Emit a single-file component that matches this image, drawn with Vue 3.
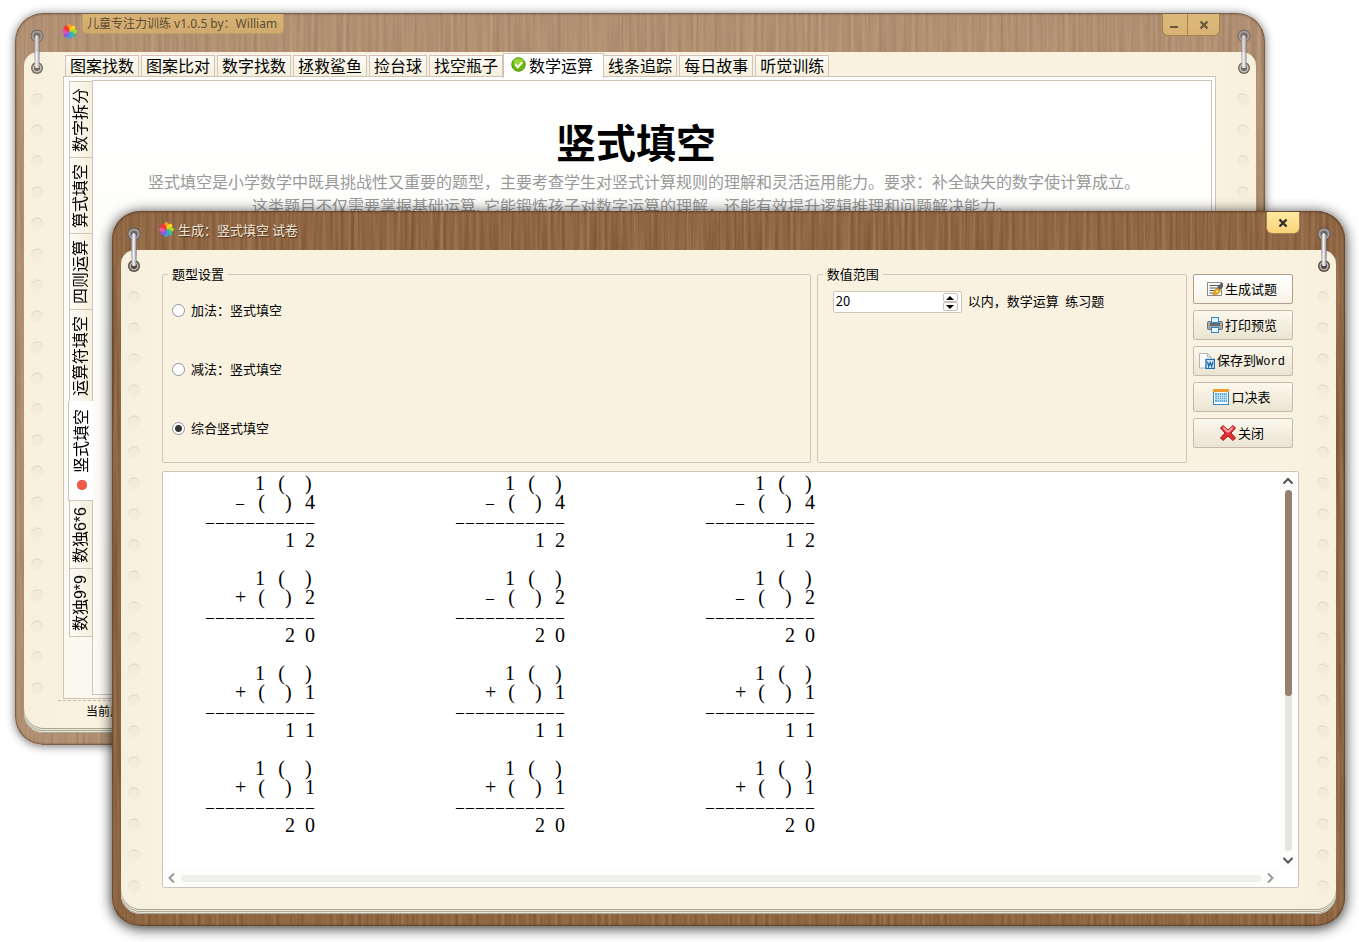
<template>
    <div class="desktop">
        <svg class="defs" aria-hidden="true">
            <filter id="grain" x="0" y="0" width="100%" height="100%" color-interpolation-filters="sRGB">
                <feTurbulence type="fractalNoise" baseFrequency="0.28 0.007" numOctaves="4" seed="7" />
                <feColorMatrix type="matrix" values="0.22 0 0 0 0.45  0.21 0 0 0 0.295  0.19 0 0 0 0.17  0 0 0 0 1" />
            </filter>
            <linearGradient id="steel" x1="0" x2="1" y1="0" y2="0">
                <stop offset="0" stop-color="#8e8e92" />
                <stop offset="0.4" stop-color="#f4f4f6" />
                <stop offset="0.7" stop-color="#c4c4c8" />
                <stop offset="1" stop-color="#6c6c70" />
            </linearGradient>
            <symbol id="flower" viewBox="0 0 16 16">
                <ellipse v-for="(color, index) in petals" :key="color" cx="8" cy="3.6" rx="2.3" ry="3.5" :fill="color" :transform="`rotate(${index * 45} 8 8)`" />
            </symbol>
            <symbol id="ring" viewBox="0 0 18 46">
                <circle cx="9" cy="8" r="6.5" fill="#5c5856" />
                <circle cx="9" cy="8" r="4.6" fill="#6f6c6b" stroke="#a3a1a1" stroke-width="2" />
                <circle cx="9" cy="8" r="2.6" fill="#4b4847" />
                <circle cx="9" cy="40" r="6" fill="#57463d" />
                <circle cx="9" cy="40" r="3.8" fill="#4d4744" stroke="#b9b6b3" stroke-width="1.6" />
                <path d="M6.6 8c-0.6 10-0.6 22 0.6 32h4c0.6-10 0.6-22 0-32a2.3 2.3 0 0 0-4.600 0z" fill="url(#steel)" />
                <path d="M6.8 8a2.2 2.2 0 0 1 4.2 0" fill="none" stroke="#444" stroke-width="1" />
            </symbol>
        </svg>

        <section class="window main-window">
            <div class="wood"><svg><rect width="100%" height="100%" filter="url(#grain)" /></svg></div>
            <header class="title-bar">
                <svg class="flower"><use href="#flower" /></svg>
                <h1 class="caption-tab">儿童专注力训练 v1.0.5 by：William</h1>
                <div class="window-buttons">
                    <button type="button" class="minimize" aria-label="最小化">
                        <svg viewBox="0 0 10 10"><path d="M0 7h8" stroke="#6b5940" stroke-width="2" /></svg>
                    </button>
                    <button type="button" aria-label="关闭窗口">
                        <svg viewBox="0 0 10 10"><path d="M1.5 1.5l7 7M8.5 1.5l-7 7" stroke="#6b5940" stroke-width="2.4" /></svg>
                    </button>
                </div>
            </header>
            <div class="paper">
                <div class="holes"></div>
                <div class="main-content">
                    <nav class="tabs">
                        <button v-for="tab in tabs" :key="tab" type="button" class="tab" :class="{ active: tab === activeTab }" @click="activeTab = tab">
                            <svg v-if="tab === activeTab" class="check" viewBox="0 0 16 16">
                                <circle cx="8" cy="8" r="7.2" fill="#6cb80c" stroke="#4c8f06" />
                                <ellipse cx="8" cy="5" rx="5" ry="3.4" fill="#a5dc45" opacity="0.8" />
                                <path d="M4.4 7.8l2.8 3 4.6-5" fill="none" stroke="#fff" stroke-width="2.2" />
                            </svg>
                            {{ tab }}
                        </button>
                    </nav>
                    <div class="pane">
                        <nav class="side-tabs">
                            <button v-for="tab in sideTabs" :key="tab" type="button" class="side-tab" :class="{ active: tab === activeSideTab }" @click="activeSideTab = tab">
                                <span class="side-label">{{ tab }}</span>
                                <i v-if="tab === activeSideTab" class="dot"></i>
                            </button>
                        </nav>
                        <article class="page">
                            <h2>竖式填空</h2>
                            <p>竖式填空是小学数学中既具挑战性又重要的题型，主要考查学生对竖式计算规则的理解和灵活运用能力。要求：补全缺失的数字使计算成立。</p>
                            <p>这类题目不仅需要掌握基础运算,&nbsp;它能锻炼孩子对数字运算的理解，还能有效提升逻辑推理和问题解决能力。&emsp;&ensp;</p>
                        </article>
                    </div>
                    <footer class="status">当前用户</footer>
                </div>
                <div class="holes"></div>
            </div>
            <svg class="ring ring-left"><use href="#ring" /></svg>
            <svg class="ring ring-right"><use href="#ring" /></svg>
        </section>

        <section class="window dialog" role="dialog" aria-labelledby="dialog-title">
            <div class="wood"><svg><rect width="100%" height="100%" filter="url(#grain)" /></svg></div>
            <header class="title-bar">
                <svg class="flower"><use href="#flower" /></svg>
                <h2 id="dialog-title" class="caption">生成：竖式填空 试卷</h2>
                <div class="window-buttons">
                    <button type="button" aria-label="关闭对话框">
                        <svg viewBox="0 0 10 10"><path d="M1.5 1.5l7 7M8.5 1.5l-7 7" stroke="#2d2d2d" stroke-width="2.4" /></svg>
                    </button>
                </div>
            </header>
            <div class="paper">
                <div class="holes"></div>
                <div class="dialog-content">
                    <div class="settings">
                        <fieldset class="types">
                            <legend>题型设置</legend>
                            <label v-for="type in types" :key="type" class="radio">
                                <input v-model="selectedType" type="radio" name="type" :value="type" />
                                {{ type }}
                            </label>
                        </fieldset>
                        <fieldset class="range">
                            <legend>数值范围</legend>
                            <div class="range-row">
                                <div class="spin">
                                    <input id="limit" v-model.number="limit" type="number" />
                                    <div class="spin-buttons">
                                        <button type="button" aria-label="增加" @click="limit++">
                                            <svg viewBox="0 0 8 4"><path d="M0 4l4-4 4 4z" /></svg>
                                        </button>
                                        <button type="button" aria-label="减少" @click="limit--">
                                            <svg viewBox="0 0 8 4"><path d="M0 0l4 4 4-4z" /></svg>
                                        </button>
                                    </div>
                                </div>
                                <label for="limit">以内，数学运算&ensp;练习题</label>
                            </div>
                        </fieldset>
                        <div class="actions">
                            <button type="button" class="primary">
                                <svg viewBox="0 0 16 16">
                                    <rect x="0.5" y="1.5" width="14" height="13" fill="#fff" stroke="#8c8c8c" />
                                    <path d="M2.5 4.5h10M2.5 7h7M2.5 9.5h5M2.5 12h4" stroke="#555" />
                                    <path d="M9 7.5l5-5.5h2v4l-4 4z" fill="#5b6068" />
                                    <path d="M6 14l1.5-4.5L10.5 7l3 3-2.5 3z" fill="#f5a81c" stroke="#c97c06" stroke-width="0.7" />
                                    <circle cx="10" cy="10.5" r="1" fill="#fff3c4" />
                                </svg>
                                <span>生成试题</span>
                            </button>
                            <button type="button">
                                <svg viewBox="0 0 16 16">
                                    <rect x="0.5" y="4.5" width="15" height="8" rx="1" fill="#a3a7ab" stroke="#6c7074" />
                                    <rect x="4.5" y="0.5" width="7" height="5" fill="#dff1fc" stroke="#2f86c5" />
                                    <rect x="3" y="6" width="10" height="3" fill="#666a6f" />
                                    <rect x="4.5" y="10.5" width="7" height="5" fill="#eaf6fd" stroke="#2f86c5" />
                                </svg>
                                <span>打印预览</span>
                            </button>
                            <button type="button">
                                <svg viewBox="0 0 16 16">
                                    <path d="M0.5 0.5h8L12 4v11H0.5z" fill="#fbfbfb" stroke="#b4b4b4" />
                                    <path d="M8.5 0.5V4H12" fill="none" stroke="#b4b4b4" />
                                    <rect x="7" y="6.5" width="8.5" height="9" fill="#fff" stroke="#1d6fb5" stroke-width="1.4" />
                                    <path d="M8.5 8.5l1.2 5 1.5-4 1.5 4 1.2-5" fill="none" stroke="#1d6fb5" stroke-width="1.4" />
                                </svg>
                                <span>保存到<span class="latin">Word</span></span>
                            </button>
                            <button type="button">
                                <svg viewBox="0 0 16 16">
                                    <rect x="0.5" y="1.5" width="15" height="14" fill="#fff" stroke="#3188c6" />
                                    <path d="M0 1.5h16" stroke="#f29a2e" stroke-width="3" />
                                    <rect x="2" y="4" width="12" height="9" fill="#58a5dc" />
                                    <path d="M2 6.5h12M2 8.5h12M2 10.5h12M4.5 4v9M6.5 4v9M8.5 4v9M10.5 4v9M12.5 4v9" stroke="#d5ebf9" stroke-width="0.7" />
                                </svg>
                                <span>口决表</span>
                            </button>
                            <button type="button">
                                <svg viewBox="0 0 16 16">
                                    <path d="M3 0.5L8 5l5-4.5L15.5 3 11 8l4.5 5-2.5 2.5L8 11l-5 4.5L0.5 13 5 8 0.5 3z" fill="#e02f33" stroke="#b21419" stroke-linejoin="round" />
                                    <path d="M3 2l5 4.5L13 2M3.5 3.5L8 7.5l4.5-4" fill="none" stroke="#f7a3a3" stroke-width="1.3" />
                                </svg>
                                <span>关闭</span>
                            </button>
                        </div>
                    </div>
                    <div class="preview">
                        <div class="sheet">
                            <div v-for="(problem, index) in problems" :key="index" class="problem">
                                <div v-for="(line, row) in problemLines(problem)" :key="row" class="line">
                                    <span v-for="(char, col) in line" :key="col" :class="charClass(char)">{{ char }}</span>
                                </div>
                            </div>
                        </div>
                        <div class="scroll scroll-y">
                            <svg viewBox="0 0 10 10"><path d="M0.5 7.5L5 3l4.5 4.5" /></svg>
                            <div class="track"><div class="thumb"></div></div>
                            <svg viewBox="0 0 10 10"><path d="M0.5 3L5 7.5 9.5 3" /></svg>
                        </div>
                        <div class="scroll scroll-x">
                            <svg viewBox="0 0 10 10"><path d="M7 0.5L2.5 5 7 9.5" /></svg>
                            <div class="track"></div>
                            <svg viewBox="0 0 10 10"><path d="M3 0.5L7.5 5 3 9.5" /></svg>
                        </div>
                    </div>
                </div>
                <div class="holes"></div>
            </div>
            <svg class="ring ring-left"><use href="#ring" /></svg>
            <svg class="ring ring-right"><use href="#ring" /></svg>
        </section>
    </div>
</template>

<script setup>
import { ref } from 'vue';

const petals = ['#ff9a1a', '#ffd21f', '#a5dc2c', '#35c08c', '#3d9be9', '#8c5bd6', '#e255b4', '#f23a34'];

const tabs = ['图案找数', '图案比对', '数字找数', '拯救鲨鱼', '捡台球', '找空瓶子', '数学运算', '线条追踪', '每日故事', '听觉训练'];
const activeTab = ref('数学运算');

const sideTabs = ['数字拆分', '算式填空', '四则运算', '运算符填空', '竖式填空', '数独6*6', '数独9*9'];
const activeSideTab = ref('竖式填空');

const types = ['加法：竖式填空', '减法：竖式填空', '综合竖式填空'];
const selectedType = ref('综合竖式填空');
const limit = ref(20);

const problems = [
    { sign: '–', digit: '4', result: '1 2' },
    { sign: '–', digit: '4', result: '1 2' },
    { sign: '–', digit: '4', result: '1 2' },
    { sign: '+', digit: '2', result: '2 0' },
    { sign: '–', digit: '2', result: '2 0' },
    { sign: '–', digit: '2', result: '2 0' },
    { sign: '+', digit: '1', result: '1 1' },
    { sign: '+', digit: '1', result: '1 1' },
    { sign: '+', digit: '1', result: '1 1' },
    { sign: '+', digit: '1', result: '2 0' },
    { sign: '+', digit: '1', result: '2 0' },
    { sign: '+', digit: '1', result: '2 0' }
];

// every line is eleven characters wide
const problemLines = ({ sign, digit, result }) => {
    return ['1 (  )', `${sign} (  ) ${digit}`, '–'.repeat(11), result].map((line) => line.padStart(11).split(''));
};

const charClass = (char) => {
    if (char === '(') return 'open';
    if (char === ')') return 'close';
    if (char === '–') return 'dash';
    return '';
};
</script>

<style>
body {
    margin: 0;
    background: #fff;
}
</style>

<style scoped>
.desktop {
    position: relative;
    min-height: 100vh;
    overflow: hidden;
    font-family: 'Noto Sans CJK SC', sans-serif;
    font-size: 13px;
    color: #000;
}

.desktop * {
    box-sizing: border-box;
}

button,
input {
    font: inherit;
    color: inherit;
}

h1,
h2,
p {
    margin: 0;
    font-weight: normal;
}

.defs {
    position: absolute;
    width: 0;
    height: 0;
}

.window {
    position: absolute;
    display: flex;
    flex-direction: column;
    border-radius: 28px;
    padding: 0 9px 12px;
}

.main-window {
    inset: 13px 94px 197px 15px;
    box-shadow: 0 1px 10px rgba(0, 0, 0, 0.55);
}

.dialog {
    inset: 211px 14px 16px 112px;
    box-shadow: 0 2px 14px rgba(0, 0, 0, 0.85);
}

.wood {
    position: absolute;
    inset: 0;
    overflow: hidden;
    border-radius: 28px;
    background: #8b6244;
}

.wood svg {
    display: block;
    width: 100%;
    height: 100%;
}

.wood::after {
    content: '';
    position: absolute;
    inset: 0;
    border-radius: 28px;
    box-shadow: inset 0 0 2px 1px rgba(60, 38, 24, 0.6);
}

.main-window .wood svg {
    opacity: 0.7;
}

.main-window .wood {
    background: #fff0e2;
}

.title-bar {
    position: relative;
    flex: none;
    display: flex;
    align-items: flex-start;
    height: 39px;
    padding: 1px 36px 0 38px;
}

.flower {
    width: 15px;
    height: 15px;
    margin-top: 10px;
}

.caption-tab {
    margin-left: 5px;
    padding: 0 6px 0 4px;
    border: 1px solid #c09d69;
    border-top: 0;
    border-radius: 0 0 5px 5px;
    background: linear-gradient(rgba(220, 184, 116, 0.9), rgba(216, 176, 108, 0.8));
    font-family: 'Noto Sans', 'Noto Sans CJK SC', sans-serif;
    font-size: 12px;
    line-height: 19px;
    color: #5e4c36;
    white-space: nowrap;
}

.caption {
    margin-left: 4px;
    font-size: 13px;
    line-height: 18px;
    padding-top: 9px;
    color: #f0e6d8;
    text-shadow: 1px 1px 1px #4d3320;
}

.window-buttons {
    display: flex;
    margin-left: auto;
    border: 1px solid #a58350;
    border-top: 0;
    border-radius: 0 0 6px 6px;
    overflow: hidden;
}

.window-buttons button {
    display: grid;
    place-items: center;
    width: 32px;
    height: 21px;
    padding: 0;
    border: 0;
    background: linear-gradient(#ffeaa0, #fdd27a);
}

.window-buttons button + button {
    border-left: 1px solid #a58350;
}

.main-window .window-buttons button {
    background: linear-gradient(#dcb97a, #d8b274);
}

.window-buttons .minimize {
    width: 24px;
}

.window-buttons svg {
    width: 10px;
    height: 10px;
}

.paper {
    position: relative;
    flex: 1;
    display: flex;
    min-height: 0;
    border-radius: 14px 14px 20px 20px;
    background: linear-gradient(90deg, #f6f0dc, #f9f2e0 5%, #f9f2e0 95%, #f6f0dc);
    box-shadow: inset 0 -1px 0 #a9a999, inset 0 -2px 0 #e9e7d3, inset 0 -3px 0 #aaa999, inset 0 -4px 0 #efebd8, inset 0 -5px 0 #a8a595;
}

.holes {
    flex: none;
    width: 12px;
    margin: 31px 7px 13px;
    background:
        radial-gradient(circle at 6px 17px, #f2ecda 5px, transparent 6px) 0 0 / 12px 31px repeat-y,
        radial-gradient(circle at 6px 16px, #ddd5c1 5px, transparent 6px) 0 0 / 12px 31px repeat-y;
}

.main-window .holes {
    margin-bottom: 26px;
}

.ring {
    position: absolute;
    top: 15px;
    width: 18px;
    height: 46px;
}

.ring-left {
    left: 13px;
}

.ring-right {
    right: 12px;
}

.main-window .ring {
    opacity: 0.8;
}

.main-content {
    flex: 1;
    display: flex;
    flex-direction: column;
    min-width: 0;
    margin: 0 14px 0 8px;
}

.tabs {
    position: relative;
    z-index: 1;
    display: flex;
    align-items: flex-end;
    gap: 2px;
    height: 25px;
    padding-left: 7px;
}

.tab {
    display: flex;
    align-items: center;
    gap: 3px;
    height: 22px;
    padding: 0 4px 2px;
    border: 1px solid #d0c4b9;
    background: linear-gradient(#fdfbf5, #f5efdc);
    font-size: 16px;
    line-height: 20px;
    white-space: nowrap;
}

.tab.active {
    height: 25px;
    margin: 0 -3px -1px -2px;
    padding: 0 10px 3px 7px;
    border-bottom: 0;
    background: #fff;
}

.check {
    width: 15px;
    height: 15px;
}

.pane {
    flex: 1;
    display: flex;
    margin: -1px 0 0 5px;
    padding: 3px;
    border: 1px solid #d0c4b9;
    background: linear-gradient(#fff, #fbf8ef);
}

.side-tabs {
    position: relative;
    z-index: 1;
    display: flex;
    flex-direction: column;
    align-items: flex-end;
    width: 26px;
    margin-right: -1px;
    padding-top: 1px;
}

.side-tab {
    flex: none;
    display: flex;
    flex-direction: column;
    align-items: center;
    gap: 4px;
    width: 24px;
    margin-bottom: -1px;
    padding: 6px 0 5px;
    border: 1px solid #d0c4b9;
    background: linear-gradient(90deg, #fdfbf5, #f5efdc);
    font-family: 'Liberation Sans', 'Noto Sans CJK SC', sans-serif;
    font-size: 16px;
}

.side-tab.active {
    width: 25px;
    padding: 8px 0 8px 2px;
    border-width: 0 0 0 1px;
    background: #fff;
}

.side-label {
    writing-mode: vertical-rl;
    text-orientation: sideways;
    transform: rotate(180deg);
    line-height: 22px;
    white-space: nowrap;
}

.dot {
    width: 10px;
    height: 10px;
    margin: 3px;
    border-radius: 50%;
    background: #f25a48;
    box-shadow: inset 0 0 0 1px #d8604f;
}

.page {
    flex: 1;
    min-width: 0;
    padding: 32px 16px 0 0;
    border: 1px solid #d0c4b9;
    background: linear-gradient(#fff, #fbf9f2);
    text-align: center;
}

.page h2 {
    padding-right: 16px;
    font-size: 40px;
    font-weight: bold;
    line-height: 56px;
}

.page p {
    font-size: 16px;
    line-height: 24px;
    color: #999;
    white-space: nowrap;
}

.status {
    height: 33px;
    margin-top: 1px;
    padding-left: 28px;
    border-top: 1px dashed #c5bcae;
    font-size: 12px;
    line-height: 20px;
}

.dialog-content {
    flex: 1;
    display: flex;
    flex-direction: column;
    gap: 8px;
    min-width: 0;
    margin: 15px 11px 26px 15px;
}

.settings {
    display: flex;
    padding-right: 6px;
}

fieldset {
    min-width: 0;
    margin: 0;
    border: 1px solid #cfc5bf;
    border-radius: 2px;
}

legend {
    padding: 0 4px;
    line-height: 18px;
}

.types {
    flex: 16 1 0;
    display: flex;
    flex-direction: column;
    gap: 41px;
    padding: 18px 5px 25px;
}

.range {
    flex: 9 1 0;
    margin-left: 6px;
    padding: 8px 5px;
}

.radio {
    display: flex;
    align-items: center;
    gap: 6px;
    padding-left: 4px;
    line-height: 18px;
}

.radio input {
    appearance: none;
    width: 13px;
    height: 13px;
    margin: 0;
    border: 1px solid #93949c;
    border-radius: 50%;
    background: #fff;
}

.radio input:checked {
    background: radial-gradient(circle, #333 0 3px, #fff 4px);
}

.range-row {
    display: flex;
    align-items: center;
    gap: 6px;
    padding-left: 10px;
}

.range-row label {
    padding-bottom: 3px;
    line-height: 18px;
    white-space: nowrap;
}

.spin {
    display: flex;
    align-items: center;
    width: 129px;
    height: 22px;
    padding: 1px 3px 1px 2px;
    border: 1px solid #cfc5bf;
    border-radius: 2px;
    background: #fff;
}

.spin input {
    flex: 1;
    min-width: 0;
    padding: 0 0 2px;
    border: 0;
    outline: 0;
    background: none;
    appearance: textfield;
    line-height: 18px;
}

.spin input::-webkit-inner-spin-button {
    appearance: none;
    margin: 0;
}

.spin-buttons {
    display: flex;
    flex-direction: column;
}

.spin-buttons button {
    display: grid;
    place-items: center;
    width: 15px;
    height: 9px;
    padding: 0;
    border: 1px solid #cfc0b8;
    border-radius: 2px;
    background: #fff;
}

.spin-buttons svg {
    width: 8px;
    height: 4px;
}

.actions {
    flex: none;
    display: flex;
    flex-direction: column;
    gap: 6px;
    width: 100px;
    margin: 9px 0 0 6px;
}

.actions button {
    display: flex;
    align-items: center;
    justify-content: center;
    height: 30px;
    padding: 0 2px 1px 0;
    border: 1px solid #c6bab0;
    border-radius: 2px;
    background: linear-gradient(#fcf8ec, #eae4d2);
    line-height: 18px;
    white-space: nowrap;
}

.actions .primary {
    border-color: #b39c8e;
    background: linear-gradient(#fff, #f8f3e6);
}

.actions svg {
    width: 16px;
    height: 16px;
    margin-right: 2px;
}

.latin {
    font-family: 'Liberation Mono', monospace;
    font-size: 12px;
}

.preview {
    flex: 1;
    display: grid;
    grid-template-columns: 1fr 18px;
    grid-template-rows: 1fr 18px;
    min-height: 0;
    padding-right: 1px;
    border: 1px solid #cdc3bb;
    border-radius: 2px;
    background: #fff;
}

.sheet {
    display: grid;
    grid-template-columns: repeat(3, 110px);
    align-content: start;
    gap: 19px 140px;
    min-height: 0;
    overflow: hidden;
    padding: 2px 0 0 42px;
    font-family: 'Liberation Serif', serif;
    font-size: 20px;
    line-height: 19px;
}

.line {
    display: grid;
    grid-template-columns: repeat(11, 10px);
    height: 19px;
    text-align: center;
    white-space: pre;
}

.open {
    text-align: right;
}

.close {
    text-align: left;
}

.dash {
    font-size: 16px;
}

.scroll {
    display: flex;
    align-items: center;
    background: #fdfdfb;
}

.scroll svg {
    width: 10px;
    height: 10px;
    fill: none;
    stroke: #555;
    stroke-width: 2;
}

.scroll-x svg {
    stroke: #999;
}

.scroll-y {
    flex-direction: column;
    gap: 4px;
    padding: 4px 0;
}

.scroll-x {
    gap: 4px;
    padding: 0 4px;
}

.track {
    flex: 1;
    border-radius: 4px;
}

.scroll-y .track {
    width: 7px;
    background: #e5e4e1;
}

.scroll-x .track {
    height: 7px;
    background: #efefed;
}

.thumb {
    height: 57%;
    border-radius: 4px;
    background: #94806f;
}
</style>
